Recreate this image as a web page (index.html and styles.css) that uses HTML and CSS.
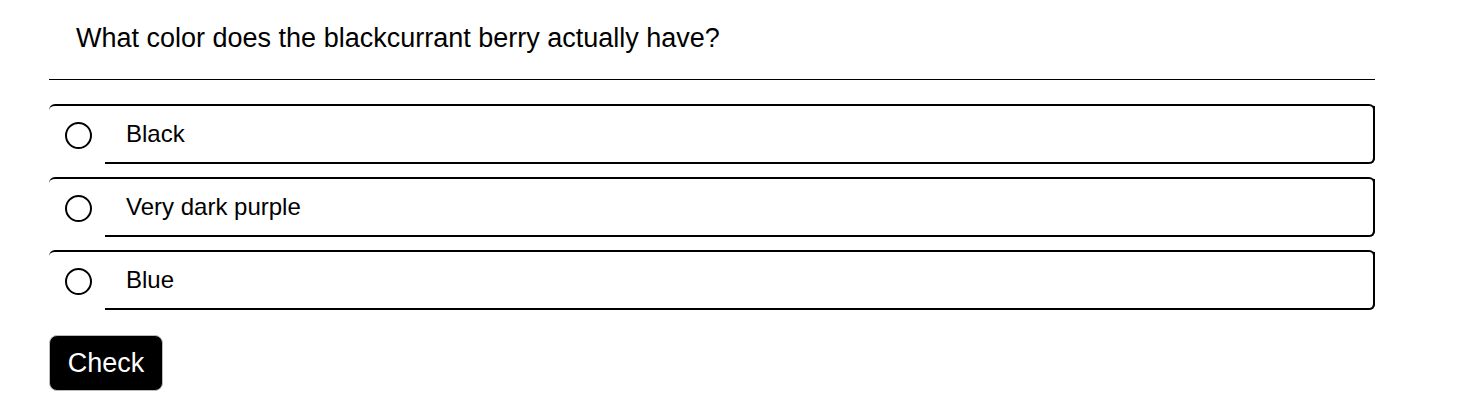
FILE: index.html
```html
<!DOCTYPE html>
<html>
<head>
<meta charset="utf-8">
<link rel="stylesheet" href="styles.css">
</head>
<body>
<div class="quiz">
  <h2 class="question">What color does the blackcurrant berry actually have?</h2>
  <hr class="rule">
  <div class="options">
    <div class="option">
      <span class="radio"></span>
      <span class="label">Black</span>
    </div>
    <div class="option">
      <span class="radio"></span>
      <span class="label">Very dark purple</span>
    </div>
    <div class="option">
      <span class="radio"></span>
      <span class="label">Blue</span>
    </div>
  </div>
  <button class="check">Check</button>
</div>
</body>
</html>
```

FILE: styles.css
```css
* { box-sizing: border-box; }
body {
  margin: 0;
  background: #fff;
  font-family: "Liberation Sans", Arial, sans-serif;
  color: #000;
}
.quiz {
  width: 1326px;
  margin-left: 49px;
  padding-top: 23px;
}
.question {
  margin: 0;
  padding-left: 27px;
  font-size: 27px;
  font-weight: normal;
  line-height: 30px;
}
.rule {
  margin: 26px 0 0 0;
  border: 0;
  border-top: 1px solid #000;
  height: 0;
}
.options {
  margin-top: 24px;
  display: flex;
  flex-direction: column;
  gap: 13px;
}
.option {
  display: flex;
  align-items: stretch;
  height: 60px;
  border-top: 2px solid #000;
  border-right: 2px solid #000;
  border-left: 0;
  border-bottom: 0;
  border-radius: 6px;
}
.radio {
  width: 56px;
  flex: none;
  display: flex;
  align-items: center;
  justify-content: center;
}
.radio::before {
  content: "";
  width: 23px;
  height: 23px;
  border: 2px solid #000;
  border-radius: 50%;
  margin-left: 2px;
}
.label {
  flex: 1;
  display: flex;
  align-items: center;
  padding-left: 21px;
  font-size: 24px;
  border-bottom: 2px solid #000;
  border-right: 2px solid #000;
  border-bottom-right-radius: 6px;
  margin-right: -2px;
}
.check {
  margin-top: 25px;
  width: 114px;
  height: 56px;
  background: #000;
  color: #fff;
  border: 1px solid #bbb;
  border-radius: 8px;
  font-family: "Liberation Sans", Arial, sans-serif;
  font-size: 27px;
  padding: 0;
}
```
